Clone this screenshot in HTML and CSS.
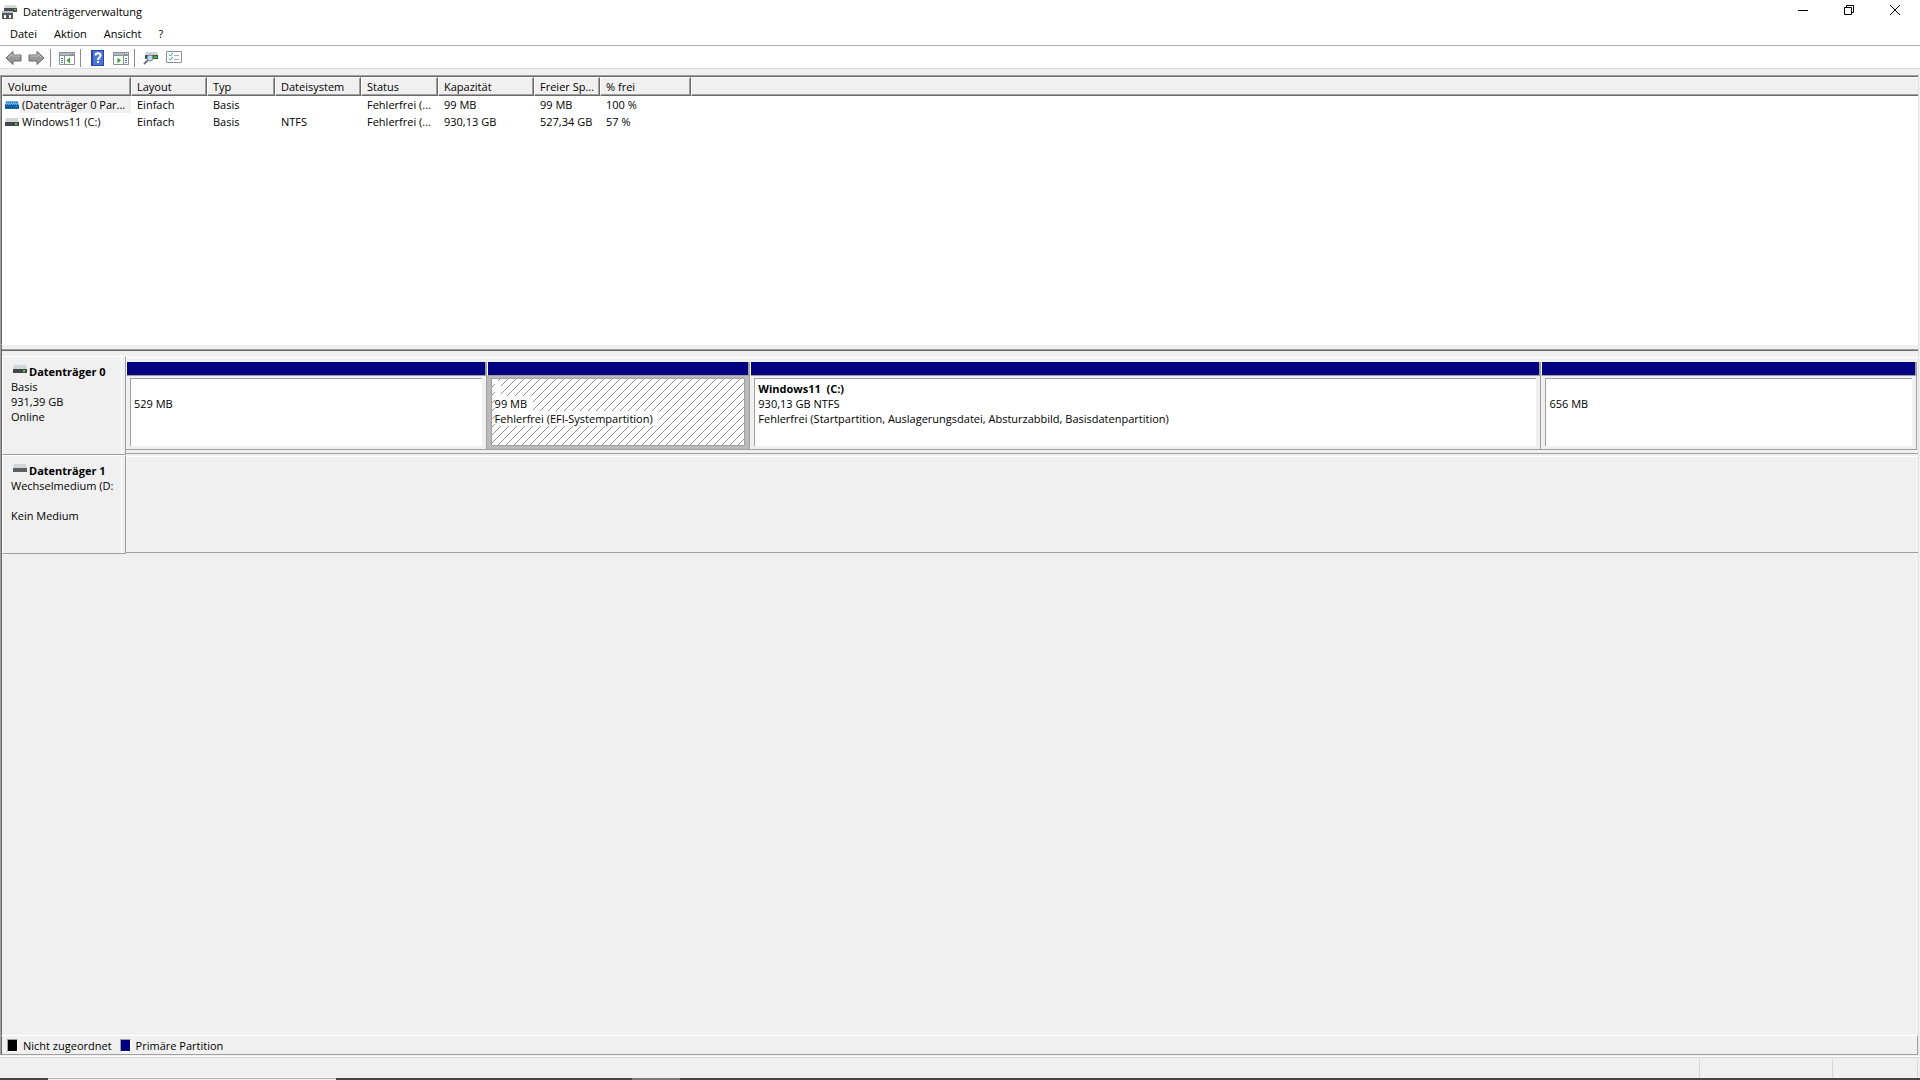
FILE: index.html
```html
<!DOCTYPE html>
<html lang="de">
<head>
    <meta charset="UTF-8">
    <meta name="viewport" content="width=device-width, initial-scale=1.0">
    <title>Datenträgerverwaltung</title>
    <link rel="stylesheet" href="styles.css">
</head>
<body>
    <header class="titlebar">
        <svg class="app-icon" width="16" height="16" viewBox="0 0 16 16">
            <path d="M3 1h11l1 3H2z" fill="#d5d8da"/>
            <path d="M2 4h13v4H2z" fill="#4a4d4f"/>
            <path d="M12 5h2v1h-2z" fill="#3fe04a"/>
            <path d="M0 7h11v3H0z" fill="#b9bcbe"/>
            <path d="M0 9h11v6H0z" fill="#55585a"/>
            <path d="M2 11h2v3H2zM7 11h2v3H7z" fill="#fff"/>
        </svg>
        <h1 class="title">Datenträgerverwaltung</h1>
        <div class="window-buttons">
            <button class="window-button" aria-label="Minimieren"><svg width="10" height="10"><path d="M0 5.5h10" stroke="#000"/></svg></button>
            <button class="window-button" aria-label="Verkleinern"><svg width="10" height="10" fill="none" stroke="#000"><path d="M.5 2.5h7v7h-7zM2.5 2.5v-2h7v7h-2"/></svg></button>
            <button class="window-button" aria-label="Schließen"><svg width="10" height="10"><path d="M0 0l10 10M10 0L0 10" stroke="#000"/></svg></button>
        </div>
    </header>
    <nav class="menu">
        <button class="menu-item">Datei</button>
        <button class="menu-item">Aktion</button>
        <button class="menu-item">Ansicht</button>
        <button class="menu-item">?</button>
    </nav>
    <div class="toolbar">
        <button class="tool" aria-label="Zurück">
            <svg width="17" height="16" viewBox="0 0 17 16"><path d="M1 8l7-6.500v3.500h8v6H8v3.500z" fill="#999" stroke="#686868"/><path d="M3 8l4-4v2h8" fill="none" stroke="#c2c2c2"/></svg>
        </button>
        <button class="tool forward" aria-label="Vorwärts">
            <svg width="17" height="16" viewBox="0 0 17 16"><path d="M16 8L9 1.500v3.500H1v6h8v3.500z" fill="#999" stroke="#686868"/><path d="M2 6h8V4l4 4" fill="none" stroke="#c2c2c2"/></svg>
        </button>
        <span class="separator"></span>
        <button class="tool" aria-label="Konsolenstruktur">
            <svg width="16" height="16" viewBox="0 0 16 16"><path d="M.5 2.500h15v12H.5z" fill="#fff" stroke="#8b9297"/><path d="M0 2h16v4H0z" fill="#8b9297"/><path d="M1 4h10" stroke="#dfe3e5"/><path d="M12 3h1v1h-1zM14 3h1v1h-1z" fill="#fff"/><path d="M5.500 6v9" stroke="#8b9297"/><path d="M2 8.500h2M2 10.500h2M2 12.500h2" stroke="#4779a8"/><path d="M11 7.500v6L7.500 10.500z" fill="#31a831"/></svg>
        </button>
        <span class="separator"></span>
        <button class="tool help" aria-label="Hilfe">
            <svg width="13" height="16" viewBox="0 0 13 16"><rect width="13" height="16" fill="#2447a8"/><rect x="2" y="1" width="10" height="14" fill="#4d74d9"/><path d="M4.500 5.500c0-3 5-3 5 0C9.500 7.500 7 7.500 7 10" fill="none" stroke="#fff" stroke-width="2"/><rect x="6" y="11" width="2" height="2" fill="#fff"/></svg>
        </button>
        <button class="tool" aria-label="Aktionsbereich">
            <svg width="16" height="16" viewBox="0 0 16 16"><path d="M.5 2.500h15v12H.5z" fill="#fff" stroke="#8b9297"/><path d="M0 2h16v4H0z" fill="#8b9297"/><path d="M1 4h10" stroke="#dfe3e5"/><path d="M12 3h1v1h-1zM14 3h1v1h-1z" fill="#fff"/><path d="M10.500 6v9" stroke="#8b9297"/><path d="M12 8.500h2M12 10.500h2M12 12.500h2" stroke="#4779a8"/><path d="M4.500 7.500v6L8 10.500z" fill="#31a831"/></svg>
        </button>
        <span class="separator"></span>
        <button class="tool" aria-label="Datenträger neu einlesen">
            <svg width="16" height="16" viewBox="0 0 16 16"><path d="M3 2h11l1 3H2z" fill="#d0d3d5"/><path d="M2 5h13v4H2z" fill="#4a4d4f"/><path d="M11 6h3v2h-3z" fill="#20cf35"/><path d="M5 10l-4 4" stroke="#667683" stroke-width="2"/><circle cx="7" cy="8" r="3" fill="#b8d9ec" stroke="#6c8799"/></svg>
        </button>
        <button class="tool checklist" aria-label="Eigenschaften">
            <svg width="16" height="16" viewBox="0 0 16 16"><path d="M.5 1.500h15v11H.5z" fill="#fff" stroke="#8b9297"/><path d="M3 4.500l1.500 1.500L7 3M3 8.500L4.500 10 7 7" fill="none" stroke="#3d87c9"/><path d="M8 5.500h5M8 9.500h5" stroke="#a5aaad"/></svg>
        </button>
    </div>

    <main class="content">
        <section class="volumes">
            <table class="volume-table">
                <colgroup>
                    <col class="col-volume"><col class="col-layout"><col class="col-type"><col class="col-fs"><col class="col-status"><col class="col-size"><col class="col-free"><col class="col-percent"><col>
                </colgroup>
                <thead>
                    <tr><th>Volume</th><th>Layout</th><th>Typ</th><th>Dateisystem</th><th>Status</th><th>Kapazität</th><th>Freier Sp...</th><th>% frei</th><th></th></tr>
                </thead>
                <tbody>
                    <tr>
                        <td class="name"><div class="name-cell"><svg width="14" height="8" viewBox="0 0 14 8"><path d="M1 0h12l1 4H0z" fill="#6aaee0"/><path d="M0 4h14v4H0z" fill="#14598f"/><path d="M1 1.500h12M0 3.500h14M0 5.500h14M0 7.500h14" stroke="#0a72c8" stroke-dasharray="1 1"/><path d="M10 5h2v1h-2z" fill="#16a08c"/></svg><span class="selected">(Datenträger 0 Par...</span></div></td>
                        <td>Einfach</td><td>Basis</td><td></td><td>Fehlerfrei (...</td><td>99 MB</td><td>99 MB</td><td>100 %</td><td></td>
                    </tr>
                    <tr>
                        <td class="name"><div class="name-cell"><svg width="14" height="8" viewBox="0 0 14 8"><path d="M1 0h12l1 4H0z" fill="#d3d6d8"/><path d="M0 4h14v4H0z" fill="#444749"/><path d="M10 5h2v2h-2z" fill="#3de04a"/></svg><span>Windows11 (C:)</span></div></td>
                        <td>Einfach</td><td>Basis</td><td>NTFS</td><td>Fehlerfrei (...</td><td>930,13 GB</td><td>527,34 GB</td><td>57 %</td><td></td>
                    </tr>
                </tbody>
            </table>
        </section>
        <div class="splitter"></div>

        <section class="disks">
            <div class="disk">
                <div class="disk-label">
                    <h2 class="disk-name"><svg width="14" height="8" viewBox="0 0 14 8"><path d="M1 0h12l1 4H0z" fill="#d3d6d8"/><path d="M0 4h14v4H0z" fill="#444749"/><path d="M10 5h2v2h-2z" fill="#3de04a"/></svg>Datenträger 0</h2>
                    <p>Basis</p>
                    <p>931,39 GB</p>
                    <p>Online</p>
                </div>
                <div class="partitions">
                    <div class="partition recovery">
                        <div class="bar"></div>
                        <div class="box">
                            <p><b></b></p>
                            <p><span>529 MB</span></p>
                        </div>
                    </div>
                    <div class="partition efi">
                        <div class="bar"></div>
                        <div class="box">
                            <p><b></b></p>
                            <p><span>99 MB</span></p>
                            <p><span>Fehlerfrei (EFI-Systempartition)</span></p>
                        </div>
                    </div>
                    <div class="partition system">
                        <div class="bar"></div>
                        <div class="box">
                            <p><b>Windows11&nbsp; (C:)</b></p>
                            <p><span>930,13 GB NTFS</span></p>
                            <p><span>Fehlerfrei (Startpartition, Auslagerungsdatei, Absturzabbild, Basisdatenpartition)</span></p>
                        </div>
                    </div>
                    <div class="partition rest">
                        <div class="bar"></div>
                        <div class="box">
                            <p><b></b></p>
                            <p><span>656 MB</span></p>
                        </div>
                    </div>
                </div>
            </div>
            <div class="disk">
                <div class="disk-label">
                    <h2 class="disk-name"><svg width="14" height="8" viewBox="0 0 14 8"><path d="M1 0h12l1 4H0z" fill="#d3d6d8"/><path d="M0 4h14v4H0z" fill="#5c5f61"/></svg>Datenträger 1</h2>
                    <p>Wechselmedium (D:</p>
                    <p></p>
                    <p>Kein Medium</p>
                </div>
                <div class="partitions"></div>
            </div>
        </section>

        <footer class="legend">
            <span class="legend-item"><i class="swatch unallocated"></i>Nicht zugeordnet</span>
            <span class="legend-item"><i class="swatch primary"></i>Primäre Partition</span>
        </footer>
    </main>
    <div class="statusbar">
        <span class="status-text"></span>
        <span class="status-small"></span>
        <span class="status-end"></span>
    </div>
    <div class="taskbar">
        <span class="task-search"></span>
        <span class="task-active"></span>
    </div>
</body>
</html>
```
FILE: styles.css
```css
* {
    box-sizing: border-box;
}
body {
    margin: 0;
    height: 100vh;
    display: flex;
    flex-direction: column;
    overflow: hidden;
    background-color: #f0f0f0;
    color: #000;
    font-family: "Open Sans", "Noto Sans", sans-serif;
    font-size: 11px;
    line-height: 15px;
}
h1, h2, p {
    margin: 0;
    font-size: inherit;
}
svg {
    display: block;
    flex-shrink: 0;
}
button {
    border: none;
    padding: 0;
    background: none;
    color: inherit;
    font: inherit;
}

/* title, menu, toolbar */
.titlebar {
    display: flex;
    align-items: center;
    height: 24px;
    padding: 0 2px 1px;
    background-color: #fff;
}
.title {
    margin-left: 5px;
    font-weight: normal;
}
.window-buttons {
    display: flex;
    align-self: flex-start;
    margin-left: auto;
    height: 20px;
}
.window-button {
    width: 46px;
    display: flex;
    align-items: center;
    justify-content: center;
}
.menu {
    display: flex;
    gap: 17px;
    height: 21px;
    padding-left: 10px;
    background-color: #fff;
}
.menu-item {
    height: 18px;
}
.toolbar {
    display: flex;
    align-items: center;
    height: 24px;
    padding: 2px 0 0 5px;
    border-top: 1px solid #acacb4;
    border-bottom: 1px solid #dcdcdc;
    background-color: #fff;
}
.forward {
    margin-left: 6px;
}
.separator {
    width: 1px;
    height: 18px;
    margin: 0 8px 0 5px;
    background-color: #8c8c8c;
}
.help {
    margin: 0 9px 0 2px;
}
.checklist {
    margin-left: 7px;
}

/* volume list */
.content {
    flex: 1;
    display: flex;
    flex-direction: column;
    margin: 6px 1px 0 0;
    border-top: 1px solid #a0a0a0;
    border-left: 1px solid #a0a0a0;
    border-right: 1px solid #e3e3e3;
}
.volumes {
    height: 268px;
    border-top: 1px solid #696969;
    border-left: 1px solid #696969;
    background-color: #fff;
}
.volume-table {
    width: 100%;
    table-layout: fixed;
    border-collapse: separate;
    border-spacing: 0;
}
.col-volume { width: 129px; }
.col-layout { width: 76px; }
.col-type { width: 68px; }
.col-fs { width: 86px; }
.col-status { width: 77px; }
.col-size { width: 96px; }
.col-free { width: 66px; }
.col-percent { width: 91px; }
th, td {
    padding: 0 0 0 6px;
    text-align: left;
    font-weight: normal;
    white-space: nowrap;
}
th {
    height: 19px;
    padding-left: 5px;
    border: 1px solid #fff;
    border-right-color: #696969;
    border-bottom-color: #696969;
    box-shadow: inset -1px -1px #a0a0a0;
    background-color: #f0f0f0;
}
th:last-child {
    border-right: none;
    box-shadow: inset 0 -1px #a0a0a0;
}
td {
    height: 17px;
}
.name {
    padding-left: 3px;
}
.name-cell {
    display: flex;
    align-items: center;
}
.name-cell span {
    flex: 1;
    margin-left: 1px;
    padding-left: 2px;
    line-height: 17px;
}
.name-cell .selected {
    background-color: #f0f0f0;
}
.splitter {
    height: 7px;
    border-top: 1px solid #fff;
    border-bottom: 1px solid #696969;
    border-left: 1px solid #696969;
    box-shadow: inset 0 -1px #a0a0a0;
}

/* graphical view */
.disks {
    flex: 1;
    padding-top: 5px;
    border-left: 1px solid #696969;
}
.disk {
    display: flex;
    height: 99px;
}
.disk-label {
    width: 124px;
    padding: 7px 0 0 8px;
    border: 1px solid #fff;
    border-right-color: #a0a0a0;
    border-bottom-color: #a0a0a0;
    box-shadow: inset -3px 0 #f0f0f0, inset -4px 0 #fff;
    white-space: nowrap;
    overflow: hidden;
}
.disk-label p {
    height: 15px;
}
.disk-name {
    display: flex;
    align-items: flex-start;
    padding-left: 2px;
    gap: 2px;
    font-weight: bold;
}
.disk-name svg {
    margin-top: 1px;
}
.partitions {
    flex: 1;
    display: flex;
    margin: 1px 0;
    padding: 4px 1px 3px 0;
    border-top: 1px solid #fff;
    border-bottom: 1px solid #a0a0a0;
}
.partition {
    min-width: 0;
    display: flex;
    flex-direction: column;
    border-right: 1px solid #a0a0a0;
    border-bottom: 1px solid #a0a0a0;
}
.recovery { flex: 360; }
.efi { flex: 263; }
.system { flex: 791; }
.rest { flex: 375; }
.bar {
    height: 14px;
    border-left: 1px solid #fff;
    border-right: 1px solid #a0a0a0;
    border-bottom: 1px solid #a0a0a0;
    background-color: #000080;
}
.box {
    flex: 1;
    margin: 2px 4px 3px;
    padding: 2px 0 0 3px;
    border-top: 1px solid #a0a0a0;
    border-left: 1px solid #a0a0a0;
    background-color: #fff;
    white-space: nowrap;
    overflow: hidden;
}
.box p {
    height: 15px;
}
.efi {
    background-color: #bababa;
}
.efi .box {
    border: 1px solid #a0a0a0;
    background-image: url("data:image/svg+xml,%3Csvg xmlns='http://www.w3.org/2000/svg' width='8' height='8'%3E%3Cpath d='M-1 9L9 -1' stroke='%23909090' stroke-width='1'/%3E%3C/svg%3E");
}
.efi b, .efi span {
    display: inline-block;
    height: 15px;
    padding-right: 6px;
    background-color: #fff;
}

.legend {
    display: flex;
    align-items: center;
    gap: 8px;
    height: 20px;
    padding-left: 5px;
    border-top: 1px solid #fff;
    border-left: 1px solid #696969;
    border-right: 1px solid #a0a0a0;
    border-bottom: 1px solid #a0a0a0;
}
.legend-item {
    display: flex;
    align-items: center;
    gap: 5px;
}
.swatch {
    width: 11px;
    height: 13px;
    border: 1px solid #a0a0a0;
    border-right-color: #fff;
    border-bottom-color: #fff;
}
.unallocated { background-color: #000; }
.primary { background-color: #000080; }

/* bottom of the window */
.statusbar {
    display: flex;
    height: 22px;
    margin-top: 1px;
    padding: 1px 2px 0 0;
    border-top: 1px solid #fff;
    box-shadow: inset 0 1px #d7d7d7;
}
.statusbar span {
    margin-top: 1px;
    border-right: 1px solid #d7d7d7;
}
.status-text { flex: 1; }
.status-small { width: 133px; }
.status-end { width: 85px; }
.taskbar {
    display: flex;
    height: 2px;
    background-color: #444448;
}
.task-search {
    width: 288px;
    margin-left: 48px;
    border-top: 1px solid #b8b8b8;
    background-color: #f0f0f0;
}
.task-active {
    width: 48px;
    margin-left: 296px;
    background-color: #77777a;
}
```
